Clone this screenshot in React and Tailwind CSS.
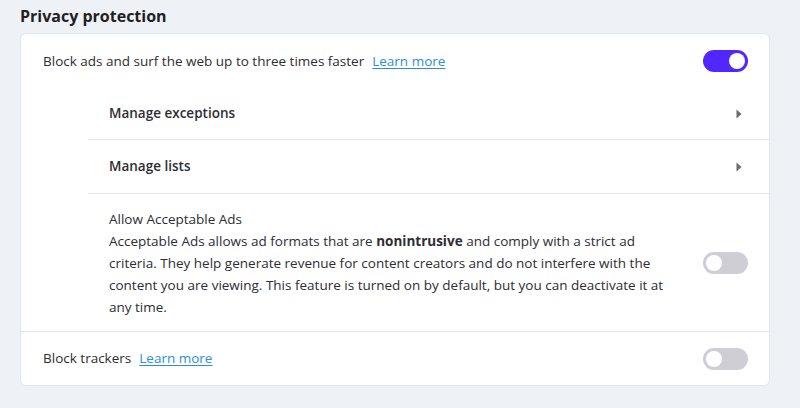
// Privacy protection settings panel
const Toggle = ({ on }) => (
  <div
    className={`flex h-[22px] w-[45px] shrink-0 items-center rounded-full px-[3px] ${
      on ? "justify-end bg-[#5227ff]" : "justify-start bg-[#cfcdd6]"
    }`}
  >
    <div className="h-4 w-4 rounded-full bg-white" />
  </div>
);

const Arrow = () => (
  <svg width="6" height="10" viewBox="0 0 6 10" className="shrink-0">
    <path d="M0.5 0.5 L5.5 5 L0.5 9.5 Z" fill="#6b6b72" />
  </svg>
);

const LearnMore = () => (
  <a href="#" className="ml-2 text-[#2b8fd8] underline underline-offset-2">
    Learn more
  </a>
);

export default function App() {
  return (
    <div
      className="min-h-[408px] w-[800px] bg-[#eef1f6] pl-5 pr-[30px] pt-[5px] text-[13.5px] text-[#2d2d33]"
      style={{ fontFamily: '"Open Sans", "Noto Sans", sans-serif' }}
    >
      <h2 className="mb-[6px] text-[16px] font-bold leading-[22px] text-[#1f1f24]">Privacy protection</h2>

      <div className="rounded-md border border-[#e2e6ee] bg-white">
        {/* Block ads */}
        <div className="flex h-[54px] items-center justify-between pl-[22px] pr-[21px]">
          <div>
            Block ads and surf the web up to three times faster
            <LearnMore />
          </div>
          <Toggle on />
        </div>

        <div className="ml-[67px]">
          <div className="flex h-[52px] items-center justify-between border-b border-[#e2e6ee] pl-[21px] pr-[27px] font-semibold">
            <span>Manage exceptions</span>
            <Arrow />
          </div>
          <div className="flex h-[54px] items-center justify-between border-b border-[#e2e6ee] pl-[21px] pr-[27px] font-semibold">
            <span>Manage lists</span>
            <Arrow />
          </div>
          <div className="flex items-center justify-between gap-6 pb-[13px] pl-[21px] pr-[21px] pt-[14px] leading-[22px]">
            <div className="w-[570px]">
              <div>Allow Acceptable Ads</div>
              <div>
                Acceptable Ads allows ad formats that are <b>nonintrusive</b> and comply with a strict ad criteria.
                They help generate revenue for content creators and do not interfere with the content you are
                viewing. This feature is turned on by default, but you can deactivate it at any time.
              </div>
            </div>
            <Toggle />
          </div>
        </div>

        <div className="flex h-[54px] items-center justify-between border-t border-[#e2e6ee] pl-[22px] pr-[21px]">
          <div>
            Block trackers
            <LearnMore />
          </div>
          <Toggle />
        </div>
      </div>
    </div>
  );
}
